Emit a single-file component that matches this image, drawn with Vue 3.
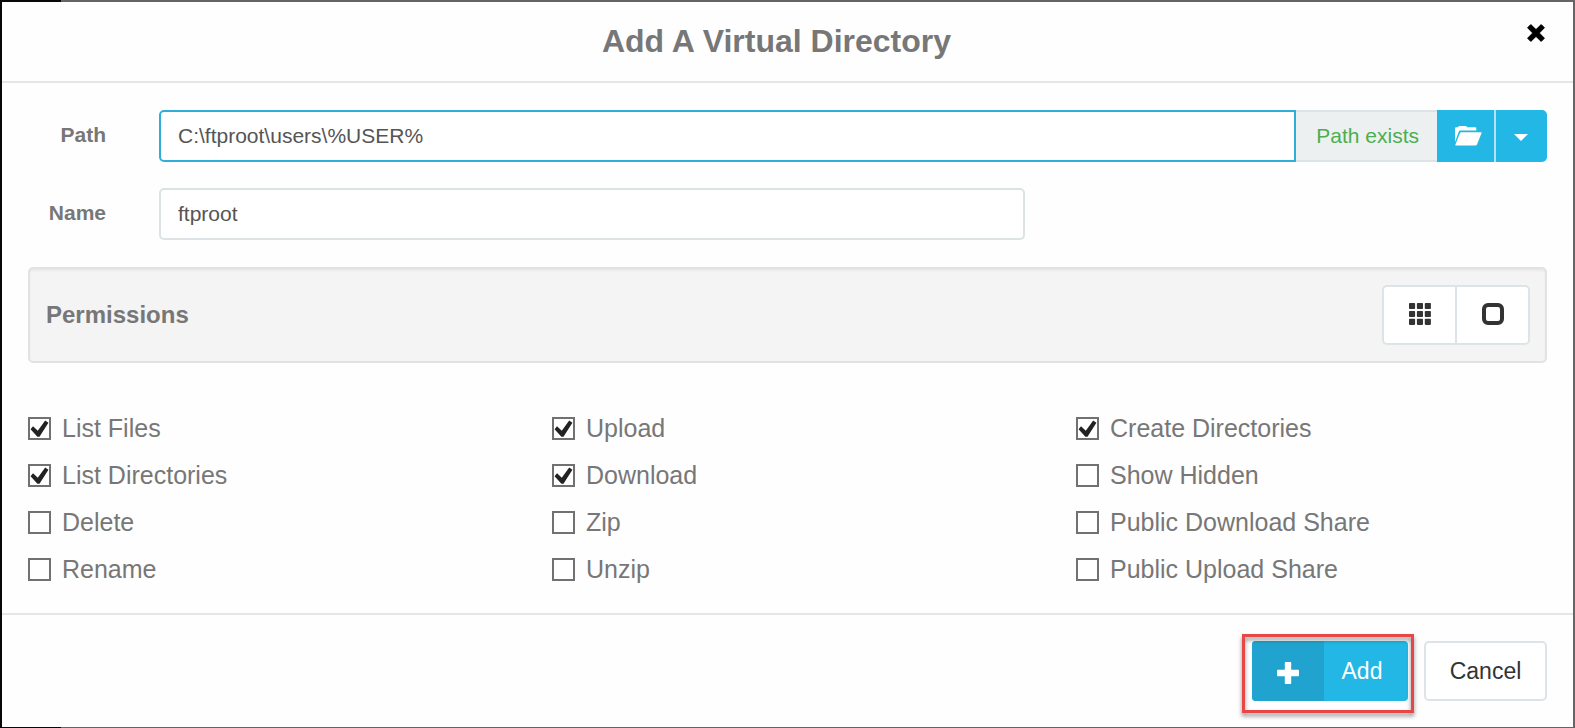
<script setup>
import { reactive, ref } from 'vue';

const path = ref('C:\\ftproot\\users\\%USER%');
const name = ref('ftproot');

const columns = reactive([
  [
    { id: 'list-files', label: 'List Files', checked: true },
    { id: 'list-directories', label: 'List Directories', checked: true },
    { id: 'delete', label: 'Delete', checked: false },
    { id: 'rename', label: 'Rename', checked: false },
  ],
  [
    { id: 'upload', label: 'Upload', checked: true },
    { id: 'download', label: 'Download', checked: true },
    { id: 'zip', label: 'Zip', checked: false },
    { id: 'unzip', label: 'Unzip', checked: false },
  ],
  [
    { id: 'create-directories', label: 'Create Directories', checked: true },
    { id: 'show-hidden', label: 'Show Hidden', checked: false },
    { id: 'public-download', label: 'Public Download Share', checked: false },
    { id: 'public-upload', label: 'Public Upload Share', checked: false },
  ],
]);

const setAll = (value) => {
  columns.forEach((column) => column.forEach((item) => { item.checked = value; }));
};
</script>

<template>
  <div class="backdrop">
    <div class="modal" role="dialog" aria-labelledby="modal-title">
      <header class="modal-header">
        <h1 id="modal-title">Add A Virtual Directory</h1>
        <button type="button" class="close-btn" aria-label="Close">
          <svg viewBox="0 0 18 18" width="18" height="18">
            <path d="M3.8 .6 9 5.6 14.2 .6 17.4 3.8 12.3 9 17.4 14.2 14.2 17.4 9 12.4 3.8 17.4 .6 14.2 5.7 9 .6 3.8Z" fill="#000" stroke="#000" stroke-width="1" stroke-linejoin="round" />
          </svg>
        </button>
      </header>

      <div class="modal-body">
        <div class="form-row">
          <label for="path">Path</label>
          <div class="input-group">
            <input id="path" v-model="path" type="text" class="text-input active" />
            <span class="addon">Path exists</span>
            <button type="button" class="folder-btn" aria-label="Browse">
              <svg viewBox="0 0 27 20" width="27" height="20">
                <path d="M0 16V2.5Q0 1.2 1.2 1.2H3Q3.4 0 4.6 0H10.4Q11.6 0 12 1.2H20.4Q21.3 1.2 21.3 2.2V4.6H5.4Q4.2 4.6 3.8 5.6Z" fill="#fff" />
                <path d="M6.3 6.2H26Q26.9 6.2 26.6 7L22 18.4Q21.6 19.4 20.6 19.4H1Q0 19.4 .4 18.5L4.9 7.2Q5.3 6.2 6.3 6.2Z" fill="#fff" />
              </svg>
            </button>
            <button type="button" class="caret-btn" aria-label="More options">
              <svg viewBox="0 0 14 7" width="14" height="7"><path d="M0 0H14L7 7Z" fill="#fff" /></svg>
            </button>
          </div>
        </div>

        <div class="form-row">
          <label for="name">Name</label>
          <div class="name-field">
            <input id="name" v-model="name" type="text" class="text-input" />
          </div>
        </div>

        <div class="well">
          <h2>Permissions</h2>
          <div class="btn-group">
            <button type="button" aria-label="Select all" @click="setAll(true)">
              <svg viewBox="0 0 22 22" width="22" height="22" fill="#333">
                <template v-for="row in 3" :key="row">
                  <rect v-for="col in 3" :key="col" :x="(col - 1) * 7.9" :y="(row - 1) * 7.9" width="6.1" height="6.1" rx=".8" />
                </template>
              </svg>
            </button>
            <button type="button" aria-label="Select none" @click="setAll(false)">
              <svg viewBox="0 0 22 22" width="22" height="22">
                <rect x="2" y="2" width="18" height="18" rx="4" fill="none" stroke="#333" stroke-width="4" />
              </svg>
            </button>
          </div>
        </div>

        <div class="permissions">
          <ul v-for="(column, index) in columns" :key="index">
            <li v-for="item in column" :key="item.id">
              <input :id="item.id" v-model="item.checked" type="checkbox" />
              <label :for="item.id">{{ item.label }}</label>
            </li>
          </ul>
        </div>
      </div>

      <footer class="modal-footer">
        <div class="add-wrap">
          <button type="button" class="add-btn">
            <span class="add-icon">
              <svg viewBox="0 0 22 22" width="22" height="22">
                <path d="M8.5 0H13.5Q14.2 0 14.2 .8V7.8H21.2Q22 7.8 22 8.6V13.4Q22 14.2 21.2 14.2H14.2V21.2Q14.2 22 13.5 22H8.5Q7.8 22 7.8 21.2V14.2H.8Q0 14.2 0 13.4V8.6Q0 7.8 .8 7.8H7.8V.8Q7.8 0 8.5 0Z" fill="#fff" />
              </svg>
            </span>
            <span class="add-text">Add</span>
          </button>
        </div>
        <button type="button" class="cancel-btn">Cancel</button>
      </footer>
    </div>
  </div>
</template>

<style>
body {
  margin: 0;
  background: #666;
}
</style>

<style scoped>
* {
  box-sizing: border-box;
}
.backdrop {
  padding: 2px 2px 1px;
  background: linear-gradient(to right, #08080a 61px, #666465 61px);
  font-family: "Liberation Sans", Arial, sans-serif;
  color: #777;
}
.modal {
  background: #fefefe;
}
button {
  display: flex;
  align-items: center;
  justify-content: center;
  margin: 0;
  padding: 0;
  border: 0;
  font: inherit;
  cursor: pointer;
}
svg {
  display: block;
}
.modal-header {
  display: flex;
  align-items: flex-start;
  padding: 20px 26px 21px;
  border-bottom: 2px solid #e4e5e6;
}
.modal-header h1 {
  flex: 1;
  margin: 0;
  font-size: 32px;
  line-height: 38px;
  text-align: center;
}
.close-btn {
  width: 22px;
  height: 22px;
  background: none;
}
.modal-body {
  padding: 27px 26px 20px;
}
.form-row {
  display: flex;
  align-items: center;
  margin-bottom: 26px;
}
.form-row label {
  flex: none;
  width: 78px;
  padding-bottom: 2px;
  font-size: 21px;
  font-weight: bold;
  text-align: right;
}
.input-group,
.name-field {
  display: flex;
  flex: 1;
  margin-left: 53px;
}
.name-field {
  flex: 0 0 57%;
}
.text-input {
  flex: 1;
  min-width: 0;
  height: 52px;
  padding: 0 17px;
  border: 2px solid #dde2e4;
  border-radius: 5px;
  outline: none;
  background: #fff;
  color: #555;
  font-family: inherit;
  font-size: 21px;
}
.text-input.active {
  border-color: #31aed6;
  border-radius: 5px 0 0 5px;
}
.addon {
  display: flex;
  align-items: center;
  padding: 0 18px 0 20px;
  border: 2px solid #dde4e7;
  border-width: 2px 0;
  background: #ecf0f1;
  color: #4cae50;
  font-size: 21px;
}
.folder-btn {
  width: 57px;
  padding-left: 5px;
  background: #23b7e5;
}
.caret-btn {
  width: 53px;
  padding-right: 2px;
  border-left: 2px solid #b5e2f2;
  border-radius: 0 5px 5px 0;
  background: #23b7e5;
}
.caret-btn svg {
  margin-top: 3px;
}
.well {
  display: flex;
  align-items: center;
  justify-content: space-between;
  margin: 27px 0 42px;
  padding: 16px 15px 16px 16px;
  border: 2px solid #e2e2e2;
  border-radius: 5px;
  background: #f4f4f4;
  box-shadow: inset 0 2px 2px rgba(0, 0, 0, 0.05);
}
.well h2 {
  margin: 0;
  font-size: 24px;
  line-height: 32px;
}
.btn-group {
  display: flex;
}
.btn-group button {
  width: 75px;
  height: 60px;
  padding-bottom: 3px;
  border: 2px solid #dde4e7;
  background: #fff;
}
.btn-group button:first-child {
  width: 73px;
  border-right: 0;
  border-radius: 5px 0 0 5px;
}
.btn-group button:last-child {
  border-radius: 0 5px 5px 0;
}
.permissions {
  display: grid;
  grid-template-columns: repeat(3, 1fr);
  margin-right: -53px;
}
.permissions ul {
  margin: 0;
  padding: 0;
  list-style: none;
}
.permissions li {
  display: flex;
  align-items: center;
  height: 47px;
}
.permissions label {
  padding: 0 0 2px 11px;
  font-size: 25px;
  line-height: 30px;
}
.permissions input {
  appearance: none;
  width: 23px;
  height: 23px;
  margin: 0;
  border: 2px solid #717171;
  background: #fff;
}
.permissions input:checked::before {
  content: "";
  display: block;
  height: 100%;
  background: #222;
  clip-path: polygon(3% 54%, 16% 38%, 41% 62%, 80% 8%, 97% 20%, 50% 93%, 39% 93%);
}
.modal-footer {
  display: flex;
  justify-content: flex-end;
  gap: 16px;
  padding: 26px;
  border-top: 2px solid #e4e5e6;
  font-size: 23px;
}
.add-wrap {
  position: relative;
}
/* highlight frame over the primary action */
.add-wrap::after {
  content: "";
  position: absolute;
  inset: -7px -6px -12px -10px;
  border: 3px solid #e8474a;
  filter: drop-shadow(0 3px 2px rgba(0, 0, 0, 0.45));
  pointer-events: none;
}
.add-btn {
  align-items: stretch;
  height: 60px;
  overflow: hidden;
  border-radius: 4px;
  background: #23b7e5;
  color: #fff;
}
.add-icon {
  display: flex;
  align-items: center;
  justify-content: center;
  width: 72px;
  padding-top: 4px;
  background: #20a4cf;
}
.add-text {
  width: 84px;
  line-height: 60px;
  padding-right: 8px;
}
.cancel-btn {
  width: 123px;
  height: 60px;
  border: 2px solid #dde4e7;
  border-radius: 5px;
  background: #fff;
  color: #333;
}
</style>
